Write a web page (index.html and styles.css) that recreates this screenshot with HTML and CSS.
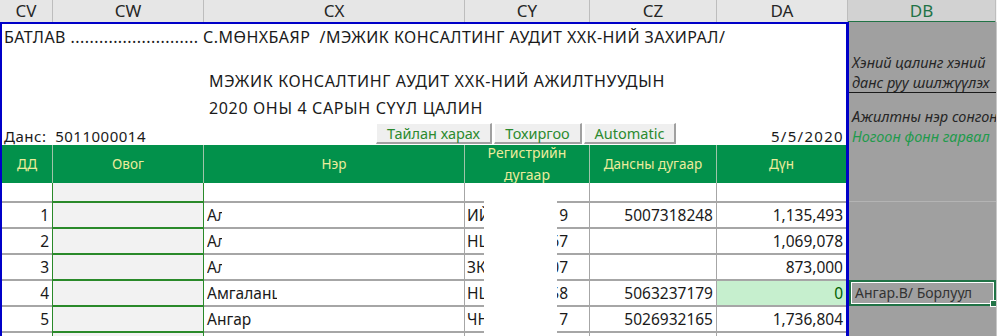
FILE: index.html
```html
<!DOCTYPE html>
<html lang="mn">
<head>
  <meta charset="UTF-8">
  <title>Цалингийн хуудас</title>
  <link rel="stylesheet" href="styles.css">
</head>
<body>
  <div class="sheet">
    <div class="col-heads">
      <div class="ch">CV</div>
      <div class="ch">CW</div>
      <div class="ch">CX</div>
      <div class="ch">CY</div>
      <div class="ch">CZ</div>
      <div class="ch">DA</div>
      <div class="ch ch-active">DB</div>
      <div class="ch ch-rest"></div>
    </div>

    <div class="body">
      <div class="print">
        <div class="memo">
          <div class="memo-line">БАТЛАВ ........................... С.МӨНХБАЯР &nbsp;/МЭЖИК КОНСАЛТИНГ АУДИТ ХХК-НИЙ ЗАХИРАЛ/</div>
          <div class="memo-gap"></div>
          <div class="memo-title">МЭЖИК КОНСАЛТИНГ АУДИТ ХХК-НИЙ АЖИЛТНУУДЫН</div>
          <div class="memo-title">2020 ОНЫ 4 САРЫН СҮҮЛ ЦАЛИН</div>
          <div class="memo-foot">
            <span class="account">Данс: &nbsp;5011000014</span>
            <div class="buttons">
              <span class="btn btn-report">Тайлан харах</span>
              <span class="btn btn-settings">Тохиргоо</span>
              <span class="btn btn-auto">Automatic</span>
            </div>
            <span class="date">5/5/2020</span>
          </div>
        </div>

        <div class="table">
          <div class="th">ДД</div>
          <div class="th th-surname">Овог</div>
          <div class="th">Нэр</div>
          <div class="th th-wrap">Регистрийн дугаар</div>
          <div class="th">Дансны дугаар</div>
          <div class="th th-last">Дүн</div>

          <div class="td td-empty"></div>
          <div class="td td-empty surname"></div>
          <div class="td td-empty"></div>
          <div class="td td-empty"></div>
          <div class="td td-empty"></div>
          <div class="td td-empty td-last"></div>

          <div class="td num">1</div>
          <div class="td surname"></div>
          <div class="td name"><span class="clip clip-short">Алтан</span></div>
          <div class="td reg"><span>ИЙ</span><span class="tail">9</span></div>
          <div class="td num">5007318248</div>
          <div class="td num td-last">1,135,493</div>

          <div class="td num">2</div>
          <div class="td surname"></div>
          <div class="td name"><span class="clip clip-short">Алтан</span></div>
          <div class="td reg"><span>НЦ</span><span class="tail">67</span></div>
          <div class="td num"></div>
          <div class="td num td-last">1,069,078</div>

          <div class="td num">3</div>
          <div class="td surname"></div>
          <div class="td name"><span class="clip clip-short">Алтан</span></div>
          <div class="td reg"><span>ЗК</span><span class="tail">07</span></div>
          <div class="td num"></div>
          <div class="td num td-last">873,000</div>

          <div class="td num">4</div>
          <div class="td surname"></div>
          <div class="td name"><span class="clip clip-long">Амгаланцэцэг</span></div>
          <div class="td reg"><span>НЦ</span><span class="tail">58</span></div>
          <div class="td num">5063237179</div>
          <div class="td num td-last td-zero">0</div>

          <div class="td num">5</div>
          <div class="td surname"></div>
          <div class="td name">Ангар</div>
          <div class="td reg"><span>ЧН</span><span class="tail">7</span></div>
          <div class="td num">5026932165</div>
          <div class="td num td-last">1,736,804</div>

          <div class="td num">6</div>
          <div class="td surname"></div>
          <div class="td name"></div>
          <div class="td reg"></div>
          <div class="td num"></div>
          <div class="td num td-last"></div>

          <div class="mask"></div>
        </div>
      </div>

      <div class="side">
        <div class="note note-top">
          <div>Хэний цалинг хэний</div>
          <div>данс руу шилжүүлэх</div>
        </div>
        <div class="note note-mid">
          <div>Ажилтны нэр сонгон</div>
          <div class="note-green">Ногоон фонн гарвал</div>
        </div>
        <div class="side-fill"></div>
        <div class="side-row"></div>
        <div class="side-row"></div>
        <div class="side-row"></div>
        <div class="side-row side-selected">Ангар.В/ Борлуул<span class="handle"></span></div>
        <div class="side-row"></div>
        <div class="side-row"></div>
      </div>
    </div>
  </div>
</body>
</html>
```

FILE: styles.css
```css
body {
  margin: 0;
  background: #ffffff;
  font-family: "Noto Sans", "Open Sans", sans-serif;
  color: #1a1a1a;
}

.sheet {
  width: 997px;
  height: 336px;
  overflow: hidden;
}

/* column letters */
.col-heads {
  display: grid;
  grid-template-columns: 53px 151px 261px 125px 127px 131px 148px 1fr;
  height: 22px;
  background: #e6e6e6;
}

.ch {
  box-sizing: border-box;
  border-right: 1px solid #bdbdbd;
  border-bottom: 1px solid #bdbdbd;
  text-align: center;
  font-size: 17px;
  line-height: 21px;
  color: #262626;
}

.ch-active {
  background: #d2d2d2;
  color: #217346;
  border-bottom: 2px solid #217346;
}

.ch-rest {
  background: #f3f3f3;
  border-right: none;
}

.body {
  display: flex;
}

/* print area framed in blue */
.print {
  width: 849px;
  box-sizing: border-box;
  border-left: 2px solid #0000c8;
  border-top: 2px solid #0000c8;
  border-right: 3px solid #0000c8;
  height: 314px;
}

.memo {
  height: 121px;
  font-size: 16px;
  display: flex;
  flex-direction: column;
}

.memo-line {
  height: 27px;
  line-height: 27px;
  padding-left: 2px;
  white-space: nowrap;
  letter-spacing: 0.45px;
}

.memo-gap {
  height: 17px;
}

.memo-title {
  height: 27px;
  line-height: 27px;
  padding-left: 207px;
  white-space: nowrap;
  letter-spacing: 0.65px;
}

.memo-foot {
  height: 23px;
  display: grid;
  grid-template-columns: 374px auto 1fr;
  align-items: end;
  font-size: 15px;
}

.account {
  padding-left: 2px;
  line-height: 18px;
  letter-spacing: 0.5px;
}

.date {
  justify-self: end;
  padding-right: 2px;
  line-height: 18px;
  letter-spacing: 1.3px;
}

.buttons {
  display: flex;
  gap: 2px;
  align-self: start;
  margin-top: 1px;
}

.btn {
  box-sizing: border-box;
  height: 21px;
  line-height: 19px;
  text-align: center;
  background: #efefef;
  color: #2b8a2e;
  font-size: 14.5px;
  border-top: 1px solid #ffffff;
  border-left: 1px solid #ffffff;
  border-right: 2px solid #a0a0a0;
  border-bottom: 2px solid #a0a0a0;
}

.btn-report { width: 116px; }
.btn-settings { width: 88px; }
.btn-auto { width: 92px; }

/* salary table */
.table {
  position: relative;
  display: grid;
  grid-template-columns: 51px 151px 261px 125px 127px 129px;
  grid-template-rows: 38px 20px repeat(6, 26px);
  font-size: 15.5px;
}

.th {
  box-sizing: border-box;
  background: #02914b;
  color: #ecec9c;
  font-size: 13.5px;
  display: flex;
  align-items: center;
  justify-content: center;
  text-align: center;
  border-right: 1px solid #9fc4a9;
}

.th-wrap {
  line-height: 22px;
  padding: 0 12px;
  font-size: 14px;
}

.th-last {
  border-right: none;
}

.td {
  box-sizing: border-box;
  border-right: 1px solid #a6a6a6;
  border-bottom: 2px solid #a6a6a6;
  line-height: 24px;
  white-space: nowrap;
  overflow: hidden;
}

.td-last {
  border-right: none;
}

.td-empty {
  line-height: 18px;
}

.surname {
  background: #f2f2f2;
  border-left: 1px solid #2a8a2a;
  border-right: 1px solid #2a8a2a;
  border-bottom: 2px solid #2a8a2a;
  margin-left: -1px;
}

.num {
  text-align: right;
  padding-right: 3px;
}

.name {
  padding-left: 3px;
}

.clip {
  display: inline-block;
  overflow: hidden;
  vertical-align: top;
}

.clip-short { width: 15px; }
.clip-long { width: 70px; }

.reg {
  display: flex;
  justify-content: space-between;
  padding-left: 2px;
  padding-right: 21px;
}

.td-zero {
  background: #c6efce;
  color: #006100;
}

/* blank shape lying over the register numbers */
.mask {
  position: absolute;
  left: 482px;
  top: 38px;
  width: 73px;
  bottom: 0;
  background: #ffffff;
}

/* helper column DB */
.side {
  width: 147px;
  height: 314px;
  background: #a0a0a0;
  border-right: 1px solid #c8c8c8;
  display: flex;
  flex-direction: column;
  font-size: 14.5px;
  font-style: italic;
  color: #262626;
  white-space: nowrap;
  overflow: hidden;
}

.side > div {
  flex-shrink: 0;
}

.note {
  padding-left: 3px;
}

.note div {
  height: 20px;
  line-height: 20px;
}

.note-top {
  height: 71px;
  box-sizing: border-box;
  padding-top: 30px;
  border-bottom: 1px solid #1a1a1a;
}

.note-mid {
  box-sizing: border-box;
  height: 55px;
  padding-top: 13px;
}

.note-green {
  color: #1f9a4c;
}

.side-fill {
  height: 53px;
  border-bottom: 1px solid #b4b4b4;
}

.side-row {
  height: 26px;
}

.side-selected {
  position: relative;
  box-sizing: border-box;
  height: 26px;
  border: 2px solid #217346;
  box-shadow: inset 0 0 0 1px #ffffff;
  font-style: normal;
  font-size: 14px;
  line-height: 22px;
  padding-left: 4px;
  color: #333333;
  overflow: visible;
}

.handle {
  position: absolute;
  right: -3px;
  bottom: -3px;
  width: 5px;
  height: 5px;
  background: #217346;
  border: 1px solid #ffffff;
}
```
